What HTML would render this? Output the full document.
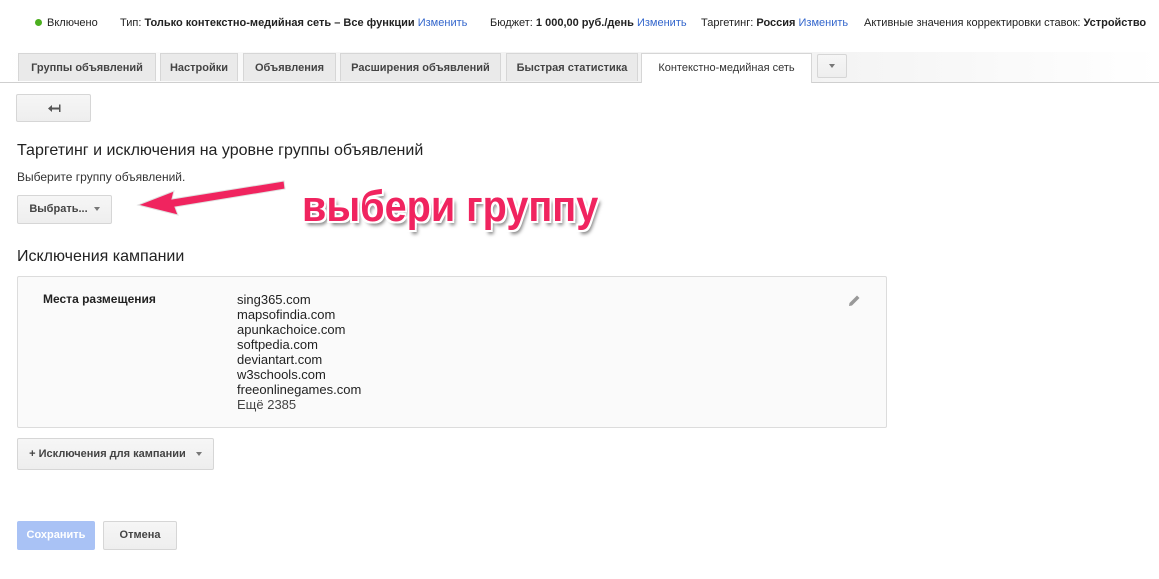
<!DOCTYPE html>
<html><head><meta charset="utf-8"><style>
body{margin:0;width:1159px;height:579px;background:#fff;font-family:"Liberation Sans",Arial,sans-serif;position:relative;overflow:hidden;color:#222}
.a{position:absolute;white-space:nowrap}
.top{top:17px;font-size:11px;color:#222}
.top b{font-weight:bold}
.lnk{color:#3366cc}
.tab{position:absolute;top:53px;height:28px;border:1px solid #d6d6d6;border-bottom:none;background:#eaeaea;font-size:11px;font-weight:bold;color:#444;text-align:center;line-height:29px;box-sizing:border-box}
.btn{position:absolute;border:1px solid #d6d6d6;border-radius:2px;background:linear-gradient(#f6f6f6,#eeeeee);box-sizing:border-box;font-size:11px;font-weight:bold;color:#444;text-align:center}
.tri{display:inline-block;width:0;height:0;border-left:3.5px solid transparent;border-right:3.5px solid transparent;border-top:4px solid #777;vertical-align:middle;margin-left:6px}
.list{font-size:13px;color:#222;line-height:15px}
</style></head><body>
<div class="a top" style="left:35px"><span style="display:inline-block;width:7px;height:7px;border-radius:50%;background:#4caf1f;margin-right:5px;vertical-align:0"></span>Включено</div>
<div class="a top" style="left:120px">Тип: <b>Только контекстно-медийная сеть – Все функции</b> <span class="lnk">Изменить</span></div>
<div class="a top" style="left:490px">Бюджет: <b>1 000,00 руб./день</b> <span class="lnk">Изменить</span></div>
<div class="a top" style="left:701px">Таргетинг: <b>Россия</b> <span class="lnk">Изменить</span></div>
<div class="a top" style="left:864px">Активные значения корректировки ставок: <b>Устройство</b></div>

<div class="a" style="left:0;top:52px;width:1159px;height:30px;background:linear-gradient(90deg,#fff 0,#f3f3f3 40%,#f3f3f3 70%,#fff 100%)"></div>
<div class="a" style="left:0;top:82px;width:1159px;height:1px;background:#cfcfcf"></div>
<div class="tab" style="left:18px;width:138px">Группы объявлений</div>
<div class="tab" style="left:160px;width:78px">Настройки</div>
<div class="tab" style="left:243px;width:93px">Объявления</div>
<div class="tab" style="left:340px;width:161px">Расширения объявлений</div>
<div class="tab" style="left:506px;width:132px">Быстрая статистика</div>
<div class="tab" style="left:641px;width:171px;height:30px;background:#fff;font-weight:normal;color:#333">Контекстно-медийная сеть</div>
<div class="btn" style="left:817px;top:54px;width:30px;height:24px;line-height:22px"><span class="tri" style="margin:0"></span></div>

<div class="btn" style="left:16px;top:94px;width:75px;height:28px"><svg style="position:absolute;left:30px;top:9px" width="14" height="9"><path d="M1 4.5 L5 1 L5 3.5 L12 3.5 L12 0.5 L13.5 0.5 L13.5 8 L12 8 L12 5.5 L5 5.5 L5 8 Z" fill="#555"/></svg></div>

<div class="a" style="left:17px;top:142px;font-size:16px;color:#222">Таргетинг и исключения на уровне группы объявлений</div>
<div class="a" style="left:17px;top:170px;font-size:12px;color:#333">Выберите группу объявлений.</div>
<div class="btn" style="left:17px;top:195px;width:95px;height:29px;line-height:27px">Выбрать...<span class="tri"></span></div>

<svg class="a" style="left:130px;top:175px" width="165" height="45"><path d="M154 6 L42 24 L44 16 L8 30 L48 40 L45 32 L155 14 Z" fill="#f0245f" stroke="#e0e0e0" stroke-width="1"/></svg>
<div class="a" style="left:302px;top:182px;font-size:44px;font-weight:bold;color:#f0245f;transform:scaleX(0.9);transform-origin:0 0;text-shadow:-2px -2px 0 #fff,2px -2px 0 #fff,-2px 2px 0 #fff,2px 2px 0 #fff,3px 4px 4px rgba(0,0,0,.5)">выбери группу</div>

<div class="a" style="left:17px;top:248px;font-size:16px;color:#222">Исключения кампании</div>
<div class="a" style="left:17px;top:276px;width:868px;height:150px;border:1px solid #dcdcdc;background:#fafafa;border-radius:2px"></div>
<div class="a" style="left:43px;top:292px;font-size:12px;font-weight:bold;color:#222">Места размещения</div>
<div class="a list" style="left:237px;top:292px">sing365.com<br>mapsofindia.com<br>apunkachoice.com<br>softpedia.com<br>deviantart.com<br>w3schools.com<br>freeonlinegames.com<br><span style="color:#444">Ещё 2385</span></div>
<svg class="a" style="left:848px;top:294px" width="13" height="13"><path d="M1 12 L1.5 9 L9 1.5 L11.5 4 L4 11.5 Z" fill="#999"/></svg>

<div class="btn" style="left:17px;top:438px;width:197px;height:32px;line-height:30px">+ Исключения для кампании<span class="tri" style="margin-left:10px"></span></div>

<div class="a" style="left:17px;top:521px;width:78px;height:29px;background:#a9c2f5;border-radius:2px;color:#fff;font-size:11px;font-weight:bold;text-align:center;line-height:29px">Сохранить</div>
<div class="btn" style="left:103px;top:521px;width:74px;height:29px;line-height:27px">Отмена</div>
</body></html>
